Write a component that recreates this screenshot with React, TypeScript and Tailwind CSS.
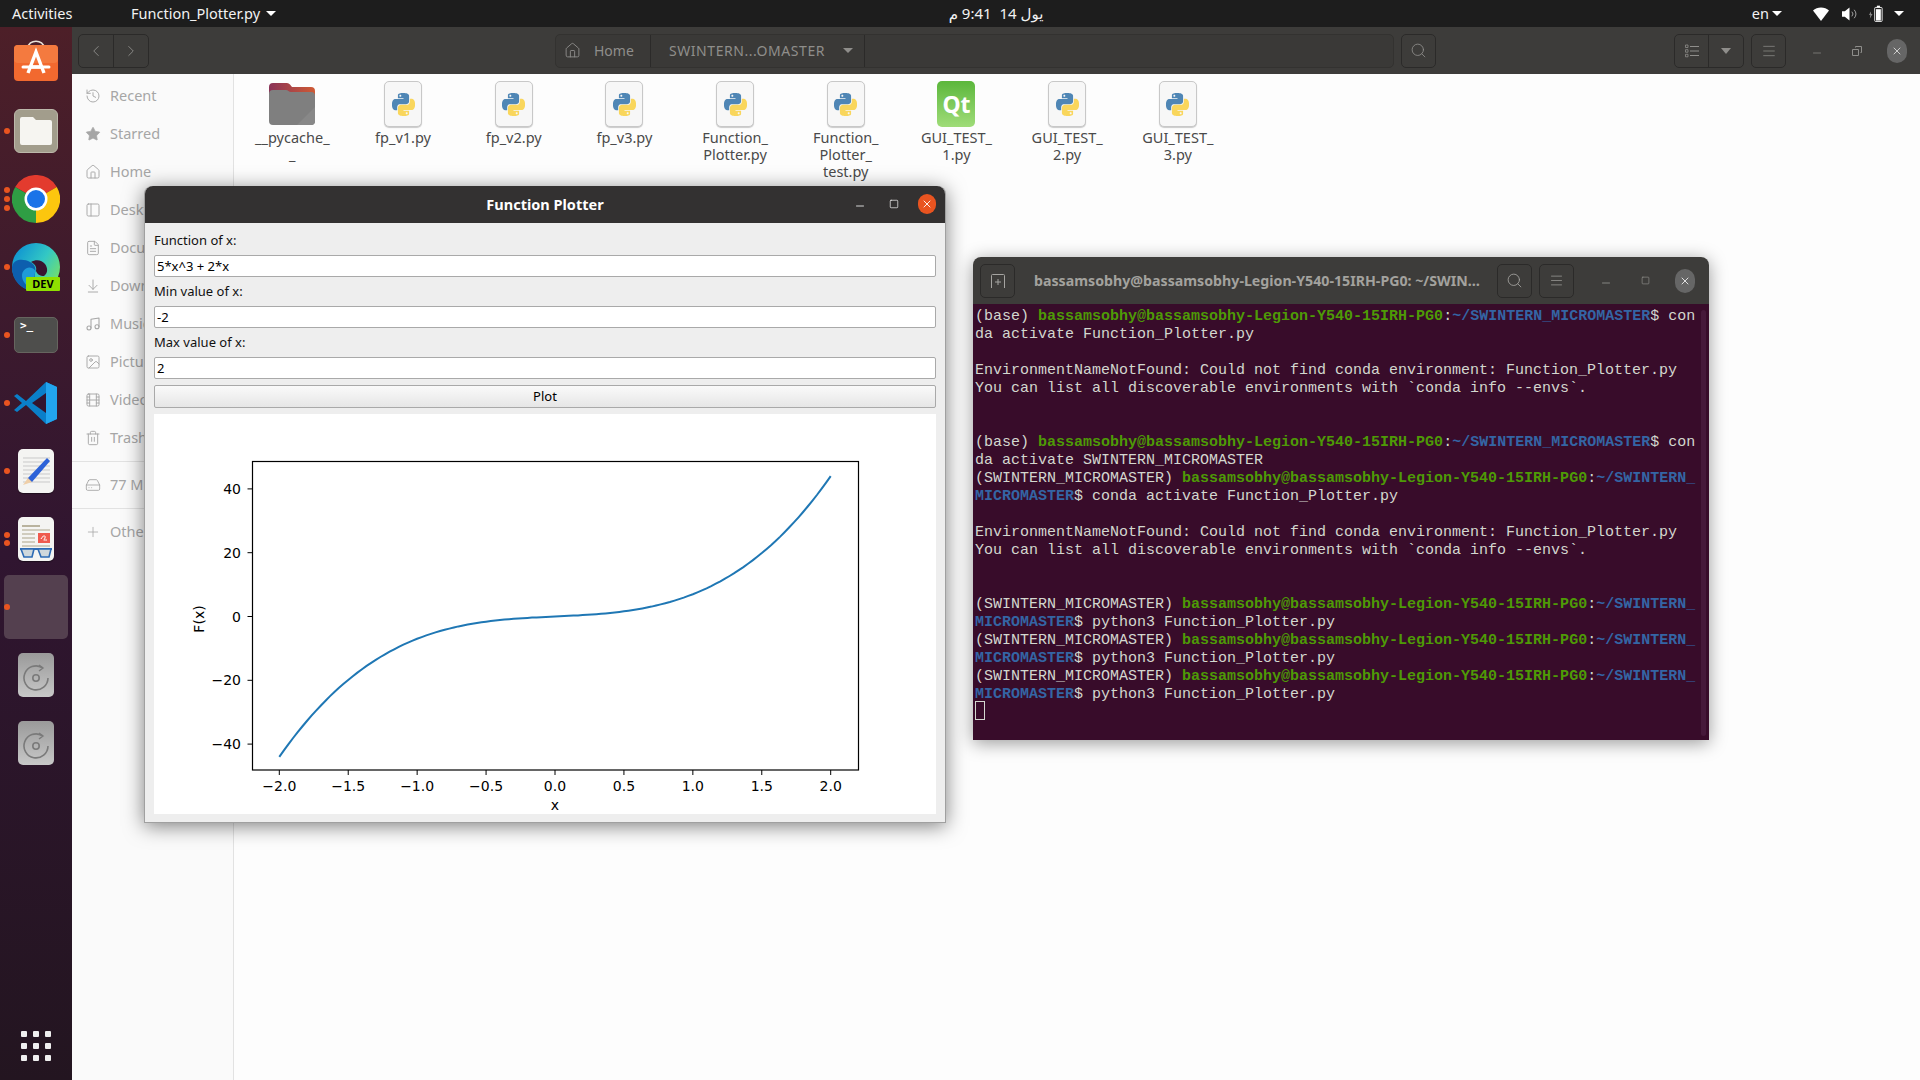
import React from 'react';
import {
  ArrowDownToLine, ChevronLeft, ChevronRight, FileText, Film, HardDrive, History, Home, Image,
  Menu, Minus, Music, PanelLeft, Plus, Search, Square, Star, Trash2, X,
} from 'lucide-react';

const PY_TOP = 'M14.25.18l.9.2.73.26.59.3.45.32.34.34.25.34.16.33.1.3.04.26.02.2-.01.13V8.5l-.05.63-.13.55-.21.46-.26.38-.3.31-.33.25-.35.19-.35.14-.33.1-.3.07-.26.04-.21.02H8.77l-.69.05-.59.14-.5.22-.41.27-.33.32-.27.35-.2.36-.15.37-.1.35-.07.32-.04.27-.02.21v3.06H3.17l-.21-.03-.28-.07-.32-.12-.35-.18-.36-.26-.36-.36-.35-.46-.32-.59-.28-.73-.21-.88-.14-1.05-.05-1.23.06-1.22.16-1.04.24-.87.32-.71.36-.57.4-.44.42-.33.42-.24.4-.16.36-.1.32-.05.24-.01h.16l.06.01h8.16v-.83H6.18l-.01-2.75-.02-.37.05-.34.11-.31.17-.28.25-.26.31-.23.38-.2.44-.18.51-.15.58-.12.64-.1.71-.06.77-.04.84-.02 1.27.05zm-6.3 1.98l-.23.33-.08.41.08.41.23.34.33.22.41.09.41-.09.33-.22.23-.34.08-.41-.08-.41-.23-.33-.33-.22-.41-.09-.41.09z';
const PY_BOTTOM = 'M21.04 6.11l.28.06.32.12.35.18.36.27.36.35.35.47.32.59.28.73.21.88.14 1.04.05 1.23-.06 1.23-.16 1.04-.24.86-.32.71-.36.57-.4.45-.42.33-.42.24-.4.16-.36.09-.32.05-.24.02-.16-.01h-8.22v.82h5.84l.01 2.76.02.36-.05.34-.11.31-.17.29-.25.25-.31.24-.38.2-.44.17-.51.15-.58.13-.64.09-.71.07-.77.04-.84.01-1.27-.04-1.07-.14-.9-.2-.73-.25-.59-.3-.45-.33-.34-.34-.25-.34-.16-.33-.1-.3-.04-.25-.02-.2.01-.13v-5.34l.05-.64.13-.54.21-.46.26-.38.3-.32.33-.24.35-.2.35-.14.33-.1.3-.06.26-.04.21-.02.13-.01h5.84l.69-.05.59-.14.5-.21.41-.28.33-.32.27-.35.2-.36.15-.36.1-.35.07-.32.04-.28.02-.21V6.07h2.09l.14.01zm-6.47 14.25l-.23.33-.08.41.08.41.23.33.33.23.41.08.41-.08.33-.23.23-.33.08-.41-.08-.41-.23-.33-.33-.23-.41-.08-.41.08z';

const PythonFile = () => (
  <div className="w-[38px] h-[46px] rounded-[5px] bg-[#f7f7f7] border border-[#c8c8c8] shadow-[0_1px_1px_rgba(0,0,0,0.2)] flex items-center justify-center">
    <svg viewBox="0 0 24 24" className="w-[23px] h-[23px]">
      <path d={PY_TOP} fill="#4f86b5" />
      <path d={PY_BOTTOM} fill="#f9d65c" />
    </svg>
  </div>
);

const QtFile = () => (
  <div className="w-[38px] h-[46px] rounded-[5px] bg-gradient-to-b from-[#5bb73b] to-[#9fdc78] flex items-center justify-center">
    <span className="text-white font-bold text-[23px] leading-none">Qt</span>
  </div>
);

const FolderIcon = () => (
  <div className="relative w-[46px] h-[46px] pt-[2px]">
    <svg viewBox="0 0 46 42" className="w-[46px] h-[42px]">
      <defs>
        <linearGradient id="tab" x1="0" x2="1" y1="0" y2="0">
          <stop offset="0" stopColor="#8a3358" />
          <stop offset="1" stopColor="#cf5a34" />
        </linearGradient>
      </defs>
      <path d="M4 0h14a4 4 0 0 1 3 1.5L23 4h19a4 4 0 0 1 4 4v12H0V4a4 4 0 0 1 4-4z" fill="url(#tab)" />
      <path d="M4 7h13c2 0 3 2 5 2h20a4 4 0 0 1 4 4v25a4 4 0 0 1-4 4H4a4 4 0 0 1-4-4V11a4 4 0 0 1 4-4z" fill="#7f7f7f" />
      <path d="M46 24v14a4 4 0 0 1-4 4H28z" fill="#888888" />
    </svg>
  </div>
);

const files: { icon: React.ReactNode; lines: string[] }[] = [
  { icon: <FolderIcon />, lines: ['__pycache_', '_'] },
  { icon: <PythonFile />, lines: ['fp_v1.py'] },
  { icon: <PythonFile />, lines: ['fp_v2.py'] },
  { icon: <PythonFile />, lines: ['fp_v3.py'] },
  { icon: <PythonFile />, lines: ['Function_', 'Plotter.py'] },
  { icon: <PythonFile />, lines: ['Function_', 'Plotter_', 'test.py'] },
  { icon: <QtFile />, lines: ['GUI_TEST_', '1.py'] },
  { icon: <PythonFile />, lines: ['GUI_TEST_', '2.py'] },
  { icon: <PythonFile />, lines: ['GUI_TEST_', '3.py'] },
];

const sideIcon = 'w-[16px] h-[16px] shrink-0';
const places: [React.ReactNode, string][] = [
  [<History className={sideIcon} strokeWidth={1.4} />, 'Recent'],
  [<Star className={sideIcon} fill="currentColor" strokeWidth={1} />, 'Starred'],
  [<Home className={sideIcon} strokeWidth={1.4} />, 'Home'],
  [<PanelLeft className={sideIcon} strokeWidth={1.4} />, 'Desktop'],
  [<FileText className={sideIcon} strokeWidth={1.4} />, 'Documents'],
  [<ArrowDownToLine className={sideIcon} strokeWidth={1.4} />, 'Downloads'],
  [<Music className={sideIcon} strokeWidth={1.6} />, 'Music'],
  [<Image className={sideIcon} strokeWidth={1.4} />, 'Pictures'],
  [<Film className={sideIcon} strokeWidth={1.4} />, 'Videos'],
  [<Trash2 className={sideIcon} strokeWidth={1.4} />, 'Trash'],
];

const SideRow = ({ icon, label }: { icon: React.ReactNode; label: string }) => (
  <div className="h-[38px] flex items-center gap-[9px] pl-[13px] text-[#a6a6a6] text-[14.5px] whitespace-nowrap">
    {icon}
    <span>{label}</span>
  </div>
);

/* ---- dock icons ---- */
const AppStoreIcon = () => (
  <svg viewBox="0 0 44 42" className="w-[44px] h-[42px] -mt-[4px]">
    <path d="M14 8c0-9 16-9 16 0" fill="none" stroke="#e9e2d8" strokeWidth="1.6" />
    <rect x="0" y="5" width="44" height="36" rx="4" fill="#f2692f" />
    <rect x="0" y="5" width="44" height="18" rx="4" fill="#f47a3f" />
    <path d="M14 33 22 12l8 21M17 27h10" fill="none" stroke="#fff" strokeWidth="3.4" />
    <path d="M9 27h26" stroke="#fff" strokeWidth="3" strokeLinecap="round" />
  </svg>
);

const FilesIcon = () => (
  <div className="w-[44px] h-[44px] rounded-[6px] bg-[#a29d8c] border border-[#bcb8aa] flex items-center justify-center">
    <svg viewBox="0 0 32 28" className="w-[32px] h-[28px]">
      <path d="M2 0h11l3 3h14a2 2 0 0 1 2 2v21a2 2 0 0 1-2 2H2a2 2 0 0 1-2-2V2a2 2 0 0 1 2-2z" fill="#f6f5f1" />
    </svg>
  </div>
);

const ChromeIcon = () => (
  <svg viewBox="0 0 48 48" className="w-[48px] h-[48px]">
    <path d="M24 24 3.2 12A24 24 0 0 1 44.8 12z" fill="#e33b2e" />
    <path d="M24 24 44.8 12A24 24 0 0 1 24 48z" fill="#fcc60e" />
    <path d="M24 24 24 48A24 24 0 0 1 3.2 12z" fill="#2f9e44" />
    <circle cx="24" cy="24" r="11.5" fill="#fff" />
    <circle cx="24" cy="24" r="9" fill="#1a73e8" />
  </svg>
);

const EdgeIcon = () => (
  <div className="relative w-[48px] h-[48px]">
    <svg viewBox="0 0 48 48" className="w-[48px] h-[48px]">
      <defs>
        <linearGradient id="edge" x1="0.1" y1="0.1" x2="1" y2="0.7">
          <stop offset="0" stopColor="#0f94d2" />
          <stop offset="0.55" stopColor="#33c8c4" />
          <stop offset="1" stopColor="#74df6c" />
        </linearGradient>
      </defs>
      <circle cx="24" cy="24" r="24" fill="url(#edge)" />
      <path d="M0 24C2 15 12 16 18 19c6 3 6 8 5 11-2 6 3 12 9 12l-8 6C10 48 0 38 0 24z" fill="#0d5fae" />
      <path d="M20 25c-5-2-10 2-10 8 0 6 6 12 14 15 3 0 5 0 8-2-8-2-12-10-9-16 1-2 0-4-3-5z" fill="#1f9bd9" />
      <path d="M32 33c-4 0-7-2-8-5 1-4-1-7-5-9 5-3 11-2 14 2 3 4 3 9-1 12z" fill="#3a1530" />
    </svg>
    <span className="absolute left-[14px] bottom-0 w-[34px] h-[14px] bg-[#8fe000] rounded-[1px] text-black font-bold text-[11px] leading-[14px] text-center">DEV</span>
  </div>
);

const TerminalIcon = () => (
  <div className="w-[44px] h-[36px] rounded-[5px] bg-[#4e4e4c] border border-[#66655f] pl-[5px] pt-[1px] text-white font-['DejaVu_Sans_Mono',monospace] text-[11px] leading-[14px] font-bold">&gt;_</div>
);

const VsCodeIcon = () => (
  <svg viewBox="0 0 44 44" className="w-[44px] h-[44px]">
    <path d="M32 1 12 20 3 13l-3 2 8 7-8 7 3 2 9-7 20 19 11-5V6z" fill="#0a7fc9" />
    <path d="M32 1 43 6v32l-11 5z" fill="#22a5ee" />
    <path d="M32 12 18 22l14 10z" fill="#33152f" />
  </svg>
);

const EditorIcon = () => (
  <div className="relative w-[36px] h-[44px] rounded-[5px] bg-[#f4f4f2] shadow-[0_1px_1px_rgba(0,0,0,0.4)]">
    <svg viewBox="0 0 36 44" className="w-[36px] h-[44px]">
      {[9, 13, 17, 21, 25, 29, 33].map((y) => (
        <path key={y} d={`M5 ${y}h27`} stroke="#c9c9c9" strokeWidth="1" />
      ))}
      <path d="M29 9l3 3-18 21-5 0 1-4z" fill="#2c62d8" />
      <path d="M10 29l4 4-9 3z" fill="#efcfa8" />
    </svg>
  </div>
);

const ReaderIcon = () => (
  <div className="w-[36px] h-[44px] rounded-[5px] bg-[#f4f4f2] shadow-[0_1px_1px_rgba(0,0,0,0.4)]">
    <svg viewBox="0 0 36 44" className="w-[36px] h-[44px]">
      <path d="M4 9h18" stroke="#b9b39e" strokeWidth="2" />
      {[13, 17, 21, 25, 29].map((y) => (
        <path key={y} d={`M4 ${y}h${y > 13 && y < 28 ? 13 : 28}`} stroke="#c7c2b0" strokeWidth="1.6" />
      ))}
      <rect x="20" y="16" width="12" height="10" fill="#ef5a4e" />
      <path d="M23 22c2-4 5-4 4-1s-3 2 2 2" stroke="#fff" strokeWidth="1" fill="none" />
      <path d="M2 32h32" stroke="#2d6bb5" strokeWidth="2" />
      <path d="M3 32h13l-2 8H6zM20 32h13l-2 8h-8z" fill="#cfd8dc" stroke="#2d6bb5" strokeWidth="1.6" />
    </svg>
  </div>
);

const DiskIcon = () => (
  <div className="w-[36px] h-[44px] rounded-[5px] bg-gradient-to-b from-[#9a9a9a] to-[#c8c8c8] flex items-center justify-center">
    <svg viewBox="0 0 28 28" className="w-[28px] h-[28px] mt-[5px]">
      <path d="M20 3.5A12 12 0 1 0 26 14" fill="none" stroke="#7a7a7a" strokeWidth="1.6" />
      <path d="M17 1l4 3-4 3" fill="none" stroke="#7a7a7a" strokeWidth="1.4" />
      <circle cx="14" cy="14" r="3.2" fill="none" stroke="#7a7a7a" strokeWidth="1.6" />
    </svg>
  </div>
);

const dock: { icon: React.ReactNode; dots: number; active?: boolean; gap?: number }[] = [
  { icon: <AppStoreIcon />, dots: 0 },
  { icon: <FilesIcon />, dots: 1 },
  { icon: <ChromeIcon />, dots: 3 },
  { icon: <EdgeIcon />, dots: 1 },
  { icon: <TerminalIcon />, dots: 1 },
  { icon: <VsCodeIcon />, dots: 1 },
  { icon: <EditorIcon />, dots: 1 },
  { icon: <ReaderIcon />, dots: 2 },
  { icon: null, dots: 1, active: true },
  { icon: <DiskIcon />, dots: 0 },
  { icon: <DiskIcon />, dots: 0 },
];

const Dock = () => (
  <aside className="w-[72px] shrink-0 flex flex-col pt-[2px] bg-gradient-to-b from-[#4d1f28] via-[#301530] to-[#231520]">
    {dock.map((d, i) => (
      <div key={i} className="relative h-[68px] flex items-center justify-center">
        {d.active && <div className="w-[64px] h-[64px] rounded-[5px] bg-[#54404f]" />}
        {d.icon}
        {d.dots > 0 && (
          <div className={`absolute left-[4px] top-0 h-full flex flex-col justify-center ${d.dots === 2 ? 'gap-[2px]' : 'gap-[3px]'}`}>
            {Array.from({ length: d.dots }).map((_, j) => (
              <span key={j} className="block w-[6px] h-[6px] rounded-full bg-[#e95420]" />
            ))}
          </div>
        )}
      </div>
    ))}
    <div className="mt-auto mb-[19px] grid grid-cols-3 gap-[6px] w-[30px] mx-auto">
      {Array.from({ length: 9 }).map((_, i) => (
        <span key={i} className="w-[6px] h-[6px] rounded-[1px] bg-[#efefef]" />
      ))}
    </div>
  </aside>
);

const Caret = ({ className = '' }: { className?: string }) => (
  <span className={`inline-block w-0 h-0 border-x-[5px] border-x-transparent border-t-[5px] border-t-white ${className}`} />
);

const TopBar = () => (
  <header className="h-[27px] shrink-0 bg-[#1d1d1d] flex items-center text-[#f2f2f2] text-[14.5px] relative">
    <span className="ml-[12px] w-[119px]">Activities</span>
    <span>Function_Plotter.py</span>
    <Caret className="ml-[6px]" />
    <span dir="rtl" className="absolute left-[936px] w-[120px] text-center whitespace-pre text-[15px]">{'يول 14  9:41 م'}</span>
    <div className="ml-auto flex items-center">
      <span>en</span>
      <Caret className="ml-[3px] mr-[31px]" />
      <svg viewBox="0 0 16 14" className="w-[16px] h-[14px] mr-[13px]">
        <path d="M0 3.5C4-.5 12-.5 16 3.5L8 14z" fill="#fff" />
      </svg>
      <svg viewBox="0 0 16 14" className="w-[15px] h-[14px] mr-[12px]">
        <path d="M0 4h3l5-4v14l-5-4H0z" fill="#fff" />
        <path d="M10.5 4.5a3.5 3.5 0 0 1 0 5M13 2.5a7 7 0 0 1 0 9" fill="none" stroke="#aaa" strokeWidth="1" />
      </svg>
      <svg viewBox="0 0 16 20" className="w-[14px] h-[18px] mr-[11px]">
        <path d="M2 7 0 11h1.5L1 15l3-5H2.5z" fill="#888" />
        <rect x="6.5" y="2.5" width="8.5" height="16" rx="1" fill="none" stroke="#fff" strokeWidth="1" />
        <rect x="9" y="0.5" width="3.5" height="2" fill="#fff" />
        <rect x="8" y="4.5" width="5.5" height="13" fill="#fff" />
      </svg>
      <Caret className="mr-[16px]" />
    </div>
  </header>
);

const hbBtn = 'border border-[#2b2a29] rounded-[5px] flex items-center justify-center text-[#8f8e8b]';

const RestoreIcon = () => (
  <svg viewBox="0 0 10 10" className="w-[10px] h-[10px]" fill="none" stroke="currentColor">
    <path d="M.5 3.5h6v6h-6zM3.5 1.5v-1h6v6h-1" />
  </svg>
);

const FilesHeader = () => (
  <div className="h-[47px] shrink-0 bg-[#3d3c3a] flex items-center pl-[6px]">
    <div className={`${hbBtn} w-[71px] h-[34px]`}>
      <div className="w-[35px] h-full flex items-center justify-center border-r border-[#2b2a29]">
        <ChevronLeft className="w-[18px] h-[18px]" strokeWidth={1.2} />
      </div>
      <div className="w-[35px] h-full flex items-center justify-center">
        <ChevronRight className="w-[18px] h-[18px]" strokeWidth={1.2} />
      </div>
    </div>
    <div className="ml-[406px] w-[839px] h-[34px] flex items-center border border-[#333230] rounded-[5px] bg-[#3a3937] text-[#8f8e8b] text-[14px]">
      <div className="w-[95px] h-full flex items-center pl-[8px] gap-[13px] border-r border-[#2b2a29]">
        <Home className="w-[17px] h-[17px]" strokeWidth={1.3} />
        <span>Home</span>
      </div>
      <div className="w-[214px] h-full flex items-center pl-[18px] border-r border-[#2b2a29]">
        <span className="tracking-[0.55px]">SWINTERN...OMASTER</span>
        <span className="ml-[18px] w-0 h-0 border-x-[5px] border-x-transparent border-t-[5px] border-t-[#8f8e8b]" />
      </div>
    </div>
    <div className={`${hbBtn} ml-[7px] w-[35px] h-[34px]`}>
      <Search className="w-[17px] h-[17px]" strokeWidth={1.2} />
    </div>
    <div className={`${hbBtn} ml-[238px] w-[70px] h-[34px]`}>
      <div className="w-[35px] h-full flex items-center justify-center border-r border-[#2b2a29]">
        <svg viewBox="0 0 14 14" className="w-[14px] h-[14px]" fill="none" stroke="currentColor">
          <path d="M5 2.5h9M5 7h9M5 11.5h9" />
          <path d="M.5 1h2.5v2.5H.5zM.5 5.7h2.5v2.5H.5zM.5 10.3h2.5v2.5H.5z" strokeWidth="0.8" />
        </svg>
      </div>
      <div className="w-[35px] h-full flex items-center justify-center">
        <span className="w-0 h-0 border-x-[5px] border-x-transparent border-t-[6px] border-t-[#8f8e8b]" />
      </div>
    </div>
    <div className={`${hbBtn} ml-[7px] w-[35px] h-[34px]`}>
      <Menu className="w-[16px] h-[16px]" strokeWidth={1.1} />
    </div>
    <div className="ml-[25px] flex items-center text-[#8f8e8b]">
      <Minus className="w-[12px] h-[12px] mt-[4px]" strokeWidth={1.4} />
      <div className="ml-[29px]">
        <RestoreIcon />
      </div>
      <div className="ml-[25px] w-[20px] h-[24px] rounded-full bg-[#666666] flex items-center justify-center text-[#e8e8e8]">
        <X className="w-[12px] h-[12px]" strokeWidth={1.6} />
      </div>
    </div>
  </div>
);

const FilesWindow = () => (
  <div className="flex-1 flex flex-col min-w-0">
    <FilesHeader />
    <div className="flex-1 flex min-h-0">
      <nav className="w-[162px] shrink-0 bg-[#fafafa] border-r border-[#e2e2e2] pt-[3px]">
        {places.map(([icon, label]) => (
          <SideRow key={label} icon={icon} label={label} />
        ))}
        <div className="h-px bg-[#e2e2e2] my-[4px]" />
        <SideRow icon={<HardDrive className={sideIcon} strokeWidth={1.3} />} label="77 MB Volume" />
        <div className="h-px bg-[#e2e2e2] my-[4px]" />
        <SideRow icon={<Plus className={sideIcon} strokeWidth={1.2} />} label="Other Locations" />
      </nav>
      <main className="flex-1 bg-[#fdfdfd] pl-[3px] pt-[7px] flex items-start">
        {files.map((f, i) => (
          <div key={i} className="w-[110.7px] flex flex-col items-center">
            {f.icon}
            <div className="mt-[2px] text-center text-[14.5px] leading-[17px] text-[#4a4a4a]">
              {f.lines.map((l, j) => (
                <div key={j}>{l}</div>
              ))}
            </div>
          </div>
        ))}
      </main>
    </div>
  </div>
);

/* ---- plot window ---- */
const px = (x: number) => 401 + 137.85 * x;
const py = (y: number) => 202.5 - 3.19 * y;
const curve = Array.from({ length: 121 }, (_, i) => {
  const x = -2 + (4 * i) / 120;
  return `${px(x).toFixed(1)},${py(5 * x * x * x + 2 * x).toFixed(1)}`;
}).join(' ');

const xTicks = [-2, -1.5, -1, -0.5, 0, 0.5, 1, 1.5, 2];
const yTicks = [40, 20, 0, -20, -40];
const tickFont = "font-['DejaVu_Sans',sans-serif] text-[14px] fill-black";

const Plot = () => (
  <svg viewBox="0 0 782 400" className="w-[782px] h-[400px] bg-white block">
    <rect x="98.5" y="47.5" width="606" height="308.5" fill="none" stroke="#000" strokeWidth="1.2" />
    {xTicks.map((t) => (
      <g key={t}>
        <path d={`M${px(t)} 356v5`} stroke="#000" />
        <text x={px(t)} y="377" textAnchor="middle" className={tickFont}>
          {t.toFixed(1).replace('-', '\u2212')}
        </text>
      </g>
    ))}
    {yTicks.map((t) => (
      <g key={t}>
        <path d={`M98.5 ${py(t)}h-5`} stroke="#000" />
        <text x="87" y={py(t) + 5} textAnchor="end" className={tickFont}>
          {String(t).replace('-', '\u2212')}
        </text>
      </g>
    ))}
    <polyline points={curve} fill="none" stroke="#1f77b4" strokeWidth="2" />
    <text x="401" y="396" textAnchor="middle" className={tickFont}>x</text>
    <text transform="translate(50 205) rotate(-90)" textAnchor="middle" className={tickFont}>F(x)</text>
  </svg>
);

const Field = ({ label, value }: { label: string; value: string }) => (
  <div className="flex flex-col">
    <label className="h-[20px] mb-[5px] text-[13px] leading-[20px] text-[#111111]">{label}</label>
    <input
      readOnly
      value={value}
      className="h-[22px] mb-[4px] px-[2px] bg-white border border-[#a9a9a9] rounded-[2px] text-[13px] text-black outline-none"
    />
  </div>
);

const PlotWindow = () => (
  <section className="absolute left-[144px] top-[186px] w-[802px] h-[637px] flex flex-col bg-[#eeeeee] rounded-t-[8px] border-x border-b border-[#a0a0a0] shadow-[0_3px_20px_rgba(0,0,0,0.5)]">
    <div className="h-[37px] shrink-0 bg-[#333131] rounded-t-[8px] relative flex items-center justify-center text-white font-bold text-[14.5px]">
      Function Plotter
      <div className="absolute right-[9px] top-[8px] flex items-center">
        <Minus className="w-[12px] h-[12px] text-white mr-[23px] mt-[4px]" strokeWidth={1.6} />
        <Square className="w-[10px] h-[10px] text-white mr-[19px]" strokeWidth={1.6} />
        <div className="w-[18px] h-[20px] rounded-full bg-[#e95420] flex items-center justify-center">
          <X className="w-[12px] h-[12px] text-white" strokeWidth={1.8} />
        </div>
      </div>
    </div>
    <div className="flex-1 flex flex-col px-[9px] pt-[7px]">
      <Field label="Function of x:" value="5*x^3 + 2*x" />
      <Field label="Min value of x:" value="-2" />
      <Field label="Max value of x:" value="2" />
      <button className="h-[23px] mt-[2px] mb-[6px] border border-[#a9a9a9] rounded-[2px] bg-gradient-to-b from-[#fafafa] to-[#e6e6e6] text-[13px] text-black">
        Plot
      </button>
      <Plot />
    </div>
  </section>
);

/* ---- terminal ---- */
const USER = 'bassamsobhy@bassamsobhy-Legion-Y540-15IRH-PG0';
const Green = ({ children }: { children: React.ReactNode }) => <span className="text-[#4e9a06] font-bold">{children}</span>;
const Blue = ({ children }: { children: React.ReactNode }) => <span className="text-[#3465a4] font-bold">{children}</span>;

const Prompt = ({ env, path, rest }: { env: string; path: string; rest: string }) => (
  <div>
    ({env}) <Green>{USER}</Green>:<Blue>{path}</Blue>
    {rest}
  </div>
);

const PyRun = () => (
  <>
    <Prompt env="SWINTERN_MICROMASTER" path="~/SWINTERN_" rest="" />
    <div><Blue>MICROMASTER</Blue>$ python3 Function_Plotter.py</div>
  </>
);

const ErrorBlock = () => (
  <>
    <div>&nbsp;</div>
    <div>EnvironmentNameNotFound: Could not find conda environment: Function_Plotter.py</div>
    <div>You can list all discoverable environments with `conda info --envs`.</div>
    <div>&nbsp;</div>
    <div>&nbsp;</div>
  </>
);

const tBtn = 'w-[35px] h-[34px] border border-[#2b2a29] rounded-[5px] flex items-center justify-center text-[#a5a4a1]';

const TerminalWindow = () => (
  <section className="absolute left-[973px] top-[257px] w-[736px] h-[483px] flex flex-col rounded-t-[8px] shadow-[0_3px_18px_rgba(0,0,0,0.4)]">
    <div className="h-[47px] shrink-0 bg-[#3d3c3a] rounded-t-[8px] flex items-center pl-[7px]">
      <div className={tBtn}>
        <svg viewBox="0 0 16 16" className="w-[16px] h-[16px]" fill="none" stroke="currentColor">
          <path d="M1.5 15V2.5a1 1 0 0 1 1-1h11a1 1 0 0 1 1 1V15M8 6v6M5 9h6" />
        </svg>
      </div>
      <div className="ml-[19px] w-[451px] text-[14.2px] font-bold text-[#a3a29e] whitespace-nowrap overflow-hidden text-ellipsis">
        {USER}: ~/SWINTERN_MICROMASTER
      </div>
      <div className={`${tBtn} ml-[12px]`}>
        <Search className="w-[17px] h-[17px]" strokeWidth={1.2} />
      </div>
      <div className={`${tBtn} ml-[7px]`}>
        <Menu className="w-[15px] h-[15px]" strokeWidth={1.1} />
      </div>
      <Minus className="w-[12px] h-[12px] text-[#a5a4a1] ml-[26px] mt-[4px]" strokeWidth={1.4} />
      <Square className="w-[9px] h-[9px] text-[#a5a4a1] ml-[29px]" strokeWidth={1.4} />
      <div className="ml-[25px] w-[20px] h-[24px] rounded-full bg-[#666666] flex items-center justify-center text-white">
        <X className="w-[12px] h-[12px]" strokeWidth={1.6} />
      </div>
    </div>
    <div className="flex-1 relative bg-[#380c2a] pl-[2px] pt-[4px] font-['Liberation_Mono',monospace] text-[15px] leading-[18px] text-[#d3d7cf] whitespace-pre overflow-hidden">
      <Prompt env="base" path="~/SWINTERN_MICROMASTER" rest="$ con" />
      <div>da activate Function_Plotter.py</div>
      <ErrorBlock />
      <Prompt env="base" path="~/SWINTERN_MICROMASTER" rest="$ con" />
      <div>da activate SWINTERN_MICROMASTER</div>
      <Prompt env="SWINTERN_MICROMASTER" path="~/SWINTERN_" rest="" />
      <div><Blue>MICROMASTER</Blue>$ conda activate Function_Plotter.py</div>
      <ErrorBlock />
      <PyRun />
      <PyRun />
      <PyRun />
      <div className="w-[10px] h-[19px] -mt-[3px] border border-[#d3d7cf]" />
      <div className="absolute right-[3px] top-[6px] bottom-[4px] w-[5px] rounded-full bg-[#46193a]" />
    </div>
  </section>
);

export default function App() {
  return (
    <div className="relative w-[1920px] h-[1080px] overflow-hidden flex flex-col bg-[#fdfdfd] font-['Noto_Sans','DejaVu_Sans',sans-serif]">
      <TopBar />
      <div className="flex-1 flex min-h-0">
        <Dock />
        <FilesWindow />
      </div>
      <PlotWindow />
      <TerminalWindow />
    </div>
  );
}
